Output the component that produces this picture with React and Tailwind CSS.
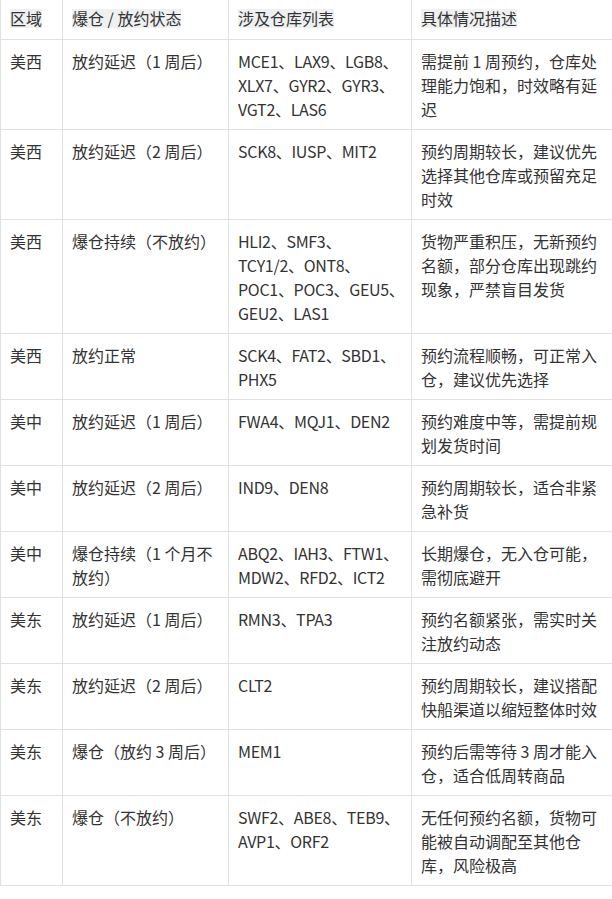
const rows = [
  ['美西', '放约延迟（1 周后）', ['MCE1、LAX9、LGB8、', 'XLX7、GYR2、GYR3、', 'VGT2、LAS6'], '需提前 1 周预约，仓库处理能力饱和，时效略有延迟'],
  ['美西', '放约延迟（2 周后）', ['SCK8、IUSP、MIT2'], '预约周期较长，建议优先选择其他仓库或预留充足时效'],
  ['美西', '爆仓持续（不放约）', ['HLI2、SMF3、', 'TCY1/2、ONT8、', 'POC1、POC3、GEU5、', 'GEU2、LAS1'], '货物严重积压，无新预约名额，部分仓库出现跳约现象，严禁盲目发货'],
  ['美西', '放约正常', ['SCK4、FAT2、SBD1、', 'PHX5'], '预约流程顺畅，可正常入仓，建议优先选择'],
  ['美中', '放约延迟（1 周后）', ['FWA4、MQJ1、DEN2'], '预约难度中等，需提前规划发货时间'],
  ['美中', '放约延迟（2 周后）', ['IND9、DEN8'], '预约周期较长，适合非紧急补货'],
  ['美中', '爆仓持续（1 个月不放约）', ['ABQ2、IAH3、FTW1、', 'MDW2、RFD2、ICT2'], '长期爆仓，无入仓可能，需彻底避开'],
  ['美东', '放约延迟（1 周后）', ['RMN3、TPA3'], '预约名额紧张，需实时关注放约动态'],
  ['美东', '放约延迟（2 周后）', ['CLT2'], '预约周期较长，建议搭配快船渠道以缩短整体时效'],
  ['美东', '爆仓（放约 3 周后）', ['MEM1'], '预约后需等待 3 周才能入仓，适合低周转商品'],
  ['美东', '爆仓（不放约）', ['SWF2、ABE8、TEB9、', 'AVP1、ORF2'], '无任何预约名额，货物可能被自动调配至其他仓库，风险极高'],
]

const headers = ['区域', '爆仓 / 放约状态', '涉及仓库列表', '具体情况描述']

const cell = 'border border-[#dfe0e2] px-[9px] pt-[9px] pb-2 align-top'

export default function App() {
  return (
    <div className="min-h-[899px] bg-white font-['Noto_Sans_CJK_SC',sans-serif] text-[16px] leading-6 text-[#333]">
      <table className="w-[612px] table-fixed border-collapse">
        <colgroup>
          <col className="w-[62px]" />
          <col className="w-[166px]" />
          <col className="w-[183px]" />
          <col className="w-[201px]" />
        </colgroup>
        <thead>
          <tr>
            {headers.map((h) => (
              <th key={h} className="border border-t-0 border-[#dfe0e2] px-[9px] pt-[6px] pb-[9px] text-left align-top font-normal">
                <span className="inline-block bg-[#eff0f1] leading-[19px]">{h}</span>
              </th>
            ))}
          </tr>
        </thead>
        <tbody>
          {rows.map(([region, status, codes, desc], i) => (
            <tr key={i}>
              <td className={cell}>{region}</td>
              <td className={cell}>{status}</td>
              <td className={cell + ' tracking-[-0.3px]'}>
                {codes.map((line) => (
                  <div key={line} className="whitespace-nowrap">{line}</div>
                ))}
              </td>
              <td className={cell}>{desc}</td>
            </tr>
          ))}
        </tbody>
      </table>
    </div>
  )
}
